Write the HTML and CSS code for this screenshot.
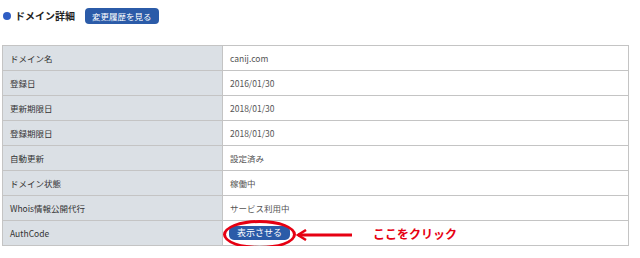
FILE: index.html
```html
<!DOCTYPE html>
<html lang="ja">
<head>
    <meta charset="UTF-8">
    <title>ドメイン詳細</title>
    <link rel="stylesheet" href="styles.css">
</head>
<body>
    <div class="cabecera">
        <span class="punto"></span>
        <h2 class="titulo">ドメイン詳細</h2>
        <button class="boton">変更履歴を見る</button>
    </div>

    <table class="detalle">
        <tr><th>ドメイン名</th><td>canij.com</td></tr>
        <tr><th>登録日</th><td>2016/01/30</td></tr>
        <tr><th>更新期限日</th><td>2018/01/30</td></tr>
        <tr><th>登録期限日</th><td>2018/01/30</td></tr>
        <tr><th>自動更新</th><td>設定済み</td></tr>
        <tr><th>ドメイン状態</th><td>稼働中</td></tr>
        <tr><th>Whois情報公開代行</th><td>サービス利用中</td></tr>
        <tr>
            <th>AuthCode</th>
            <td class="auth">
                <button class="boton boton-auth">表示させる</button>
                <span class="circulo"></span>
                <svg class="flecha" width="58" height="12" viewBox="0 0 58 12">
                    <path d="M2 6 H56" stroke="#e60012" stroke-width="3"/>
                    <path d="M10 1 L2 6 L10 11" fill="none" stroke="#e60012" stroke-width="2.5"/>
                </svg>
                <span class="nota">ここをクリック</span>
            </td>
        </tr>
    </table>
</body>
</html>
```

FILE: styles.css
```css
body {
    margin: 0;
    padding: 0 0 0 2px;
    background-color: #fff;
    font-family: "Noto Sans CJK JP", "Liberation Sans", sans-serif;
    color: #333;
}
.cabecera {
    display: flex;
    align-items: center;
    height: 31px;
    padding-left: 1px;
}
.punto {
    width: 8px;
    height: 8px;
    border-radius: 50%;
    background-color: #2f5ec4;
    margin-right: 4px;
}
.titulo {
    margin: 0 10px 0 0;
    font-size: 10px;
    font-weight: bold;
    color: #222;
}
.boton {
    border: none;
    background-color: #2b5ba8;
    color: #fff;
    font-family: inherit;
    font-size: 8.5px;
    height: 16px;
    padding: 0 7px;
    border-radius: 4px;
    line-height: 16px;
}
.detalle {
    margin-top: 14px;
    width: 627px;
    border-collapse: collapse;
    font-size: 8.5px;
}
.detalle th,
.detalle td {
    border: 1px solid #c4c4c4;
    height: 24px;
    padding: 0 0 0 7px;
    text-align: left;
}
.detalle th {
    width: 212px;
    background-color: #dbe0e5;
    font-weight: normal;
    color: #333;
}
.detalle td {
    color: #555;
}
.auth {
    position: relative;
}
.boton-auth {
    height: 14px;
    line-height: 14px;
    padding: 0 8px;
    font-size: 9px;
    margin-left: -1px;
    border-radius: 5px;
}
.circulo {
    position: absolute;
    left: 0;
    top: -1px;
    width: 67px;
    height: 23px;
    border: 3px solid #e60012;
    border-radius: 50%;
}
.flecha {
    position: absolute;
    left: 73px;
    top: 8px;
}
.nota {
    position: absolute;
    left: 150px;
    top: 4px;
    color: #e60012;
    font-size: 12px;
    font-weight: bold;
}
```
